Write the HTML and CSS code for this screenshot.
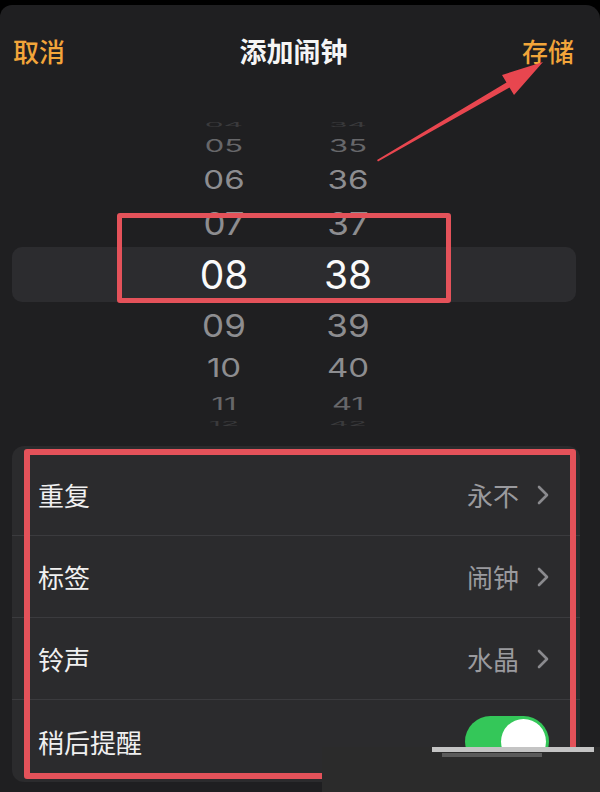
FILE: index.html
```html
<!DOCTYPE html>
<html lang="zh-CN">
<head>
    <meta charset="UTF-8">
    <meta name="viewport" content="width=device-width, initial-scale=1.0">
    <title>添加闹钟</title>
    <link rel="stylesheet" href="styles.css">
</head>
<body>
    <div class="sheet">
        <div class="nav">
            <span class="nav-btn">取消</span>
            <span class="nav-title">添加闹钟</span>
            <span class="nav-btn">存储</span>
        </div>

        <div class="picker">
            <div class="pick-row far2"><span>04</span><span>34</span></div>
            <div class="pick-row far"><span>05</span><span>35</span></div>
            <div class="pick-row mid"><span>06</span><span>36</span></div>
            <div class="pick-row near"><span>07</span><span>37</span></div>
            <div class="pick-row current"><span>08</span><span>38</span></div>
            <div class="pick-row near"><span>09</span><span>39</span></div>
            <div class="pick-row mid"><span>10</span><span>40</span></div>
            <div class="pick-row far"><span>11</span><span>41</span></div>
            <div class="pick-row far2"><span>12</span><span>42</span></div>
        </div>

        <div class="group">
            <div class="row">
                <span class="label">重复</span>
                <span class="value">永不
                    <svg class="chev" width="12" height="20" viewBox="0 0 12 20"><polyline points="2,2 10,10 2,18" /></svg>
                </span>
            </div>
            <div class="row">
                <span class="label">标签</span>
                <span class="value">闹钟
                    <svg class="chev" width="12" height="20" viewBox="0 0 12 20"><polyline points="2,2 10,10 2,18" /></svg>
                </span>
            </div>
            <div class="row">
                <span class="label">铃声</span>
                <span class="value">水晶
                    <svg class="chev" width="12" height="20" viewBox="0 0 12 20"><polyline points="2,2 10,10 2,18" /></svg>
                </span>
            </div>
            <div class="row last">
                <span class="label">稍后提醒</span>
                <span class="toggle"><span class="knob"></span></span>
            </div>
        </div>

        <!-- annotations drawn over the screenshot -->
        <div class="mark mark-time"></div>
        <div class="mark mark-list"></div>
        <svg class="arrow" width="600" height="200" viewBox="0 0 600 200">
            <polygon points="377,160 506.5,82.4 502,75 543,62 514,95 509.5,87.6 378,161.6" />
        </svg>
        <div class="stamp">
            <div class="stamp-bar"></div>
            <div class="stamp-dash"></div>
        </div>
    </div>
</body>
</html>
```

FILE: styles.css
```css
body {
    margin: 0;
    background-color: #000;
    font-family: "Noto Sans CJK SC", "Noto Sans", sans-serif;
    color: #f2f2f2;
}

.sheet {
    position: relative;
    margin-top: 5px;
    height: 787px;
    background-color: #1f1f21;
    border-radius: 12px 14px 0 0;
    overflow: hidden;
}

.nav {
    display: flex;
    justify-content: space-between;
    align-items: center;
    height: 90px;
    padding: 0 26px 0 13px;
}

.nav-btn {
    color: #f2a53a;
    font-size: 26px;
    font-weight: 500;
}

.nav-title {
    font-size: 27px;
    font-weight: 700;
    color: #f5f5f5;
}

/* time wheel */
.picker {
    margin-top: 25px;
    font-family: Inter, "Liberation Sans", sans-serif;
}

.pick-row {
    display: flex;
    gap: 44px;
    padding-left: 172px;
    margin: 0 24px 0 12px;
    color: #8d8d90;
}

.pick-row span {
    width: 80px;
    text-align: center;
}

.far2 {
    height: 10px;
    line-height: 10px;
    font-size: 30px;
    color: #3a3a3c;
}

.far2 span {
    transform: scaleY(0.2);
}

.far {
    height: 31px;
    line-height: 31px;
    font-size: 31px;
    color: #67676a;
}

.far span {
    transform: scaleY(0.55);
}

.mid {
    height: 39px;
    line-height: 39px;
    font-size: 33px;
}

.mid span {
    transform: scaleY(0.78);
}

.near {
    height: 47px;
    line-height: 47px;
    font-size: 35px;
}

.near span {
    transform: scaleY(0.9);
}

.current {
    height: 55px;
    line-height: 55px;
    font-size: 39px;
    color: #fafafa;
    background-color: #2c2c2f;
    border-radius: 10px;
}

/* settings list */
.group {
    margin: 17px 20px 0 12px;
    padding-top: 8px;
    background-color: #2b2b2d;
    border-radius: 12px;
}

.row {
    display: flex;
    justify-content: space-between;
    align-items: center;
    height: 81px;
    padding: 0 31px 0 26px;
    border-bottom: 1px solid #3b3b3e;
}

.row.last {
    border-bottom: none;
    height: 82px;
}

.label {
    font-size: 26px;
    color: #f0f0f0;
}

.value {
    display: flex;
    align-items: center;
    gap: 18px;
    font-size: 26px;
    color: #9a9a9e;
}

.chev polyline {
    fill: none;
    stroke: #8a8a8e;
    stroke-width: 2.6;
    stroke-linecap: round;
    stroke-linejoin: round;
}

.toggle {
    display: flex;
    justify-content: flex-end;
    align-items: center;
    width: 84px;
    height: 51px;
    padding: 0 3px;
    box-sizing: border-box;
    background-color: #34c759;
    border-radius: 26px;
}

.knob {
    width: 45px;
    height: 45px;
    background-color: #fff;
    border-radius: 50%;
}

/* red annotation boxes */
.mark {
    position: absolute;
    border: 5px solid #e4525a;
    border-radius: 3px;
}

.mark-time {
    left: 117px;
    top: 208px;
    width: 324px;
    height: 80px;
}

.mark-list {
    left: 24px;
    top: 444px;
    width: 540px;
    height: 318px;
    border-width: 6px;
}

.arrow {
    position: absolute;
    left: 0;
    top: -5px;
}

.arrow polygon {
    fill: #e8464f;
}

.stamp {
    position: absolute;
    left: 322px;
    top: 742px;
    width: 278px;
    height: 45px;
    background-color: #2b2b2b;
}

.stamp-bar {
    margin-left: 110px;
    width: 162px;
    height: 5px;
    background-color: #c4c4c4;
}

.stamp-dash {
    margin: 1px 0 0 120px;
    width: 100px;
    height: 4px;
    background-color: #5a5a5a;
}
```
